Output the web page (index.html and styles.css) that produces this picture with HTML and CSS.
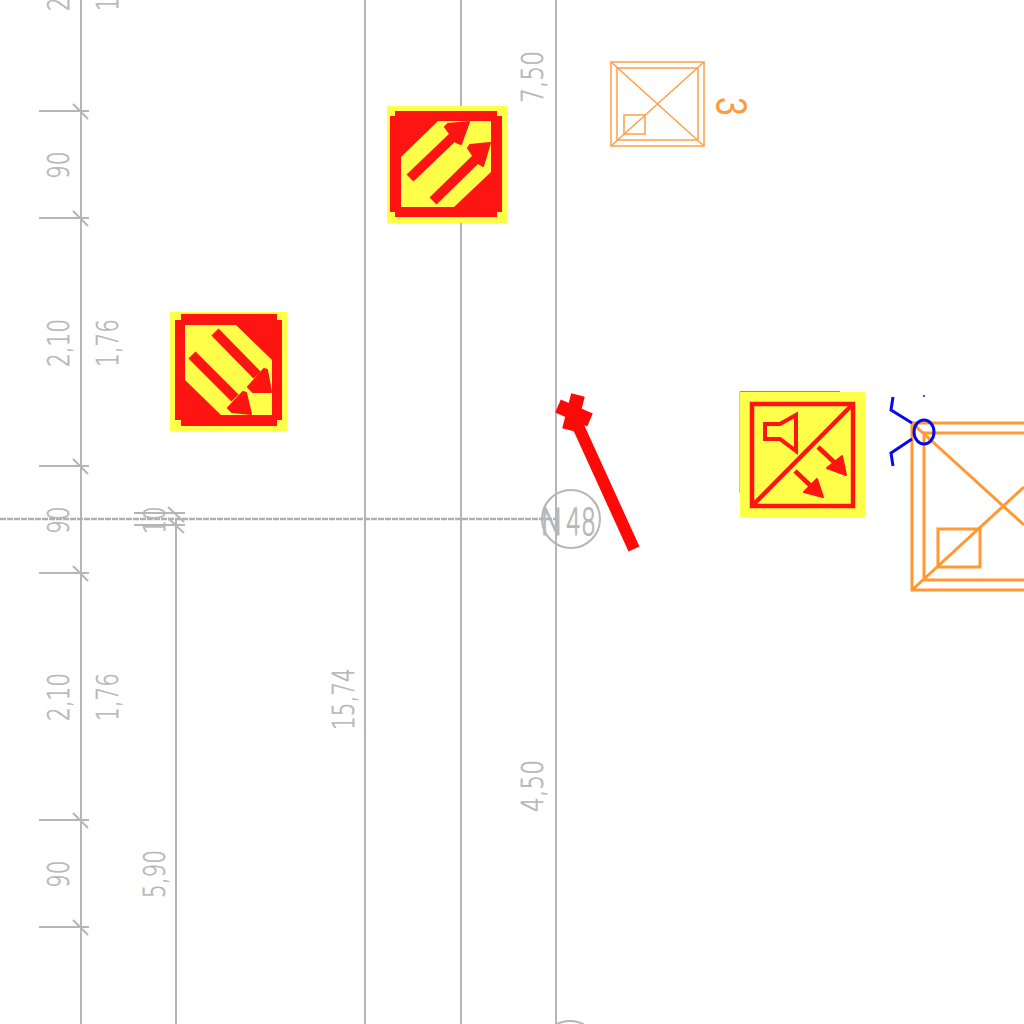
FILE: index.html
```html
<!DOCTYPE html>
<html lang="pt">
<head>
<meta charset="utf-8">
<title>Planta</title>
<link rel="stylesheet" href="styles.css">
</head>
<body>
<svg class="canvas" viewBox="0 0 1024 1024" width="1024" height="1024" xmlns="http://www.w3.org/2000/svg">
  <g class="grid">
    <path d="M81 0V1024M176 519V1024M365 0V1024M461 0V1024M556 0V1024"/>
    <path class="dash" d="M0 519H556"/>
    <path d="M39 111H89M73 104L88 119M39 218H89M73 211L88 226M39 466H89M73 459L88 474M39 573H89M73 566L88 581M39 820H89M73 813L88 828M39 927H89M73 920L88 935"/>
    <path d="M134 513H185M134 525H185M168 507L184 522M168 518L184 533"/>
    <circle cx="571" cy="519" r="29"/>
    <circle cx="570" cy="1050" r="29"/>
  </g>
  <g class="dim">
    <text transform="translate(69,11) rotate(-90) scale(.72,1)">2,10</text>
    <text transform="translate(118,11) rotate(-90) scale(.72,1)">1,76</text>
    <text transform="translate(69,179) rotate(-90) scale(.72,1)">90</text>
    <text transform="translate(69,367) rotate(-90) scale(.72,1)">2,10</text>
    <text transform="translate(118,367) rotate(-90) scale(.72,1)">1,76</text>
    <text transform="translate(69,534) rotate(-90) scale(.72,1)">90</text>
    <text transform="translate(69,721) rotate(-90) scale(.72,1)">2,10</text>
    <text transform="translate(118,721) rotate(-90) scale(.72,1)">1,76</text>
    <text transform="translate(69,888) rotate(-90) scale(.72,1)">90</text>
    <text transform="translate(165,534) rotate(-90) scale(.72,1)">10</text>
    <text transform="translate(165,898) rotate(-90) scale(.72,1)">5,90</text>
    <text transform="translate(354,730) rotate(-90) scale(.72,1)">15,74</text>
    <text transform="translate(543,812) rotate(-90) scale(.78,1)">4,50</text>
    <text transform="translate(543,103) rotate(-90) scale(.78,1)">7,50</text>
    <text class="dim-large" transform="translate(540,535) scale(.62,1)"><tspan textLength="38" lengthAdjust="spacingAndGlyphs">N</tspan><tspan x="42">48</tspan></text>
  </g>

  <g class="sign">
    <rect class="yellow" x="387" y="106" width="120" height="117"/>
    <path class="red" d="M395 111H497V116H502V212H497V217H395V212H390V116H395Z"/>
    <path class="yellow" d="M438 121H491V172L454 207H401V157Z"/>
    <path class="shaft" d="M410 178L455 135M433 201L478 157"/>
    <path class="head" d="M445 127L448 124L469 122L461 144L456 142ZM468 148L470 145L490 143L483 166L478 163Z"/>
  </g>

  <g class="sign">
    <rect class="yellow" x="170" y="312" width="117" height="119"/>
    <path class="red" d="M181 314H277V320H282V420H277V426H181V420H175V320H181Z"/>
    <path class="yellow" d="M185 325H236L272 360V415H221L185 380Z"/>
    <path class="shaft" d="M215 332L257 375M192 355L235 398"/>
    <path class="head" d="M264 369L267 370L271 392L253 392L248 387ZM243 392L246 393L251 414L232 412L228 408Z"/>
  </g>

  <g class="sign">
    <path class="hair" d="M740 493V391.500H840"/>
    <rect class="yellow" x="740" y="392" width="125" height="125"/>
    <rect class="frame" x="752" y="404" width="101" height="102"/>
    <path class="frame" d="M853 404L752 506"/>
    <path class="speaker" d="M765 424H780L796 415V451L780 439H765Z"/>
    <path class="thin-shaft" d="M818 447L835 463M795 471L812 487"/>
    <path class="head" d="M842 456L846 475L827 468ZM817 479L823 497L804 492Z"/>
  </g>

  <g class="plate">
    <rect class="plate-line" x="611" y="62" width="93" height="84"/>
    <rect class="plate-line" x="617" y="68" width="81" height="72"/>
    <rect class="plate-line" x="624" y="115" width="21" height="19"/>
    <path class="plate-line" d="M611 62L704 146M704 62L611 146"/>
    <text class="plate-num" transform="translate(716,97) rotate(90) scale(.76,1)">3</text>
  </g>

  <g class="plate-big">
    <path d="M1024 423H912V590H1024M1024 433H924V580H1024M938 529H980V567H938ZM912 423L1024 525M912 590L1024 487"/>
  </g>

  <g class="blue">
    <path d="M893 397L891 410L912 423M912 439L891 453L893 466"/>
    <ellipse cx="924" cy="432" rx="10" ry="12"/>
    <circle class="blue-dot" cx="924" cy="396" r="1"/>
  </g>

  <g class="pole">
    <path d="M573 415L634 549"/>
    <path class="pole-cross" d="M558 406L590 420M578 395L569 430"/>
  </g>
</svg>
</body>
</html>
```
FILE: styles.css
```css
html, body {
  margin: 0;
  padding: 0;
  background: #fff;
}
.canvas {
  display: block;
}
.grid path, .grid circle {
  fill: none;
  stroke: #b6b6b6;
  stroke-width: 2;
}
.grid .dash {
  stroke: #b0b0b0;
  stroke-width: 2.500;
  stroke-dasharray: 6 1;
}
.dim text {
  font-family: "DejaVu Sans", "Liberation Sans", sans-serif;
  font-weight: 200;
  font-size: 30px;
  fill: #b4b4b4;
  stroke: #b8b8b8;
  stroke-width: .7;
}
.dim .dim-large {
  font-size: 38px;
  stroke-width: 1.200;
}
.yellow {
  fill: #ffff4a;
}
.red {
  fill: #ff1414;
}
.head {
  fill: #ff1414;
  stroke: #ff1414;
  stroke-width: 2;
  stroke-linejoin: round;
}
.shaft {
  fill: none;
  stroke: #ff1414;
  stroke-width: 10;
}
.thin-shaft {
  fill: none;
  stroke: #ff1414;
  stroke-width: 4.500;
}
.frame {
  fill: none;
  stroke: #ff1414;
  stroke-width: 4.500;
}
.speaker {
  fill: none;
  stroke: #ff1414;
  stroke-width: 4;
}
.hair {
  fill: none;
  stroke: #b08a50;
  stroke-width: 1;
}
.plate-line {
  fill: none;
  stroke: #ff9f48;
  stroke-width: 1.500;
}
.plate-num {
  font-family: "Liberation Sans", Arial, sans-serif;
  font-size: 44px;
  fill: #ff9a3a;
}
.plate-big path {
  fill: none;
  stroke: #ff9933;
  stroke-width: 3;
}
.blue path, .blue ellipse {
  fill: none;
  stroke: #0a0ae6;
  stroke-width: 3;
}
.blue .blue-dot {
  fill: #0a0ae6;
}
.pole path {
  fill: none;
  stroke: #ff0808;
  stroke-width: 12;
}
.pole .pole-cross {
  stroke-width: 14;
}
```
